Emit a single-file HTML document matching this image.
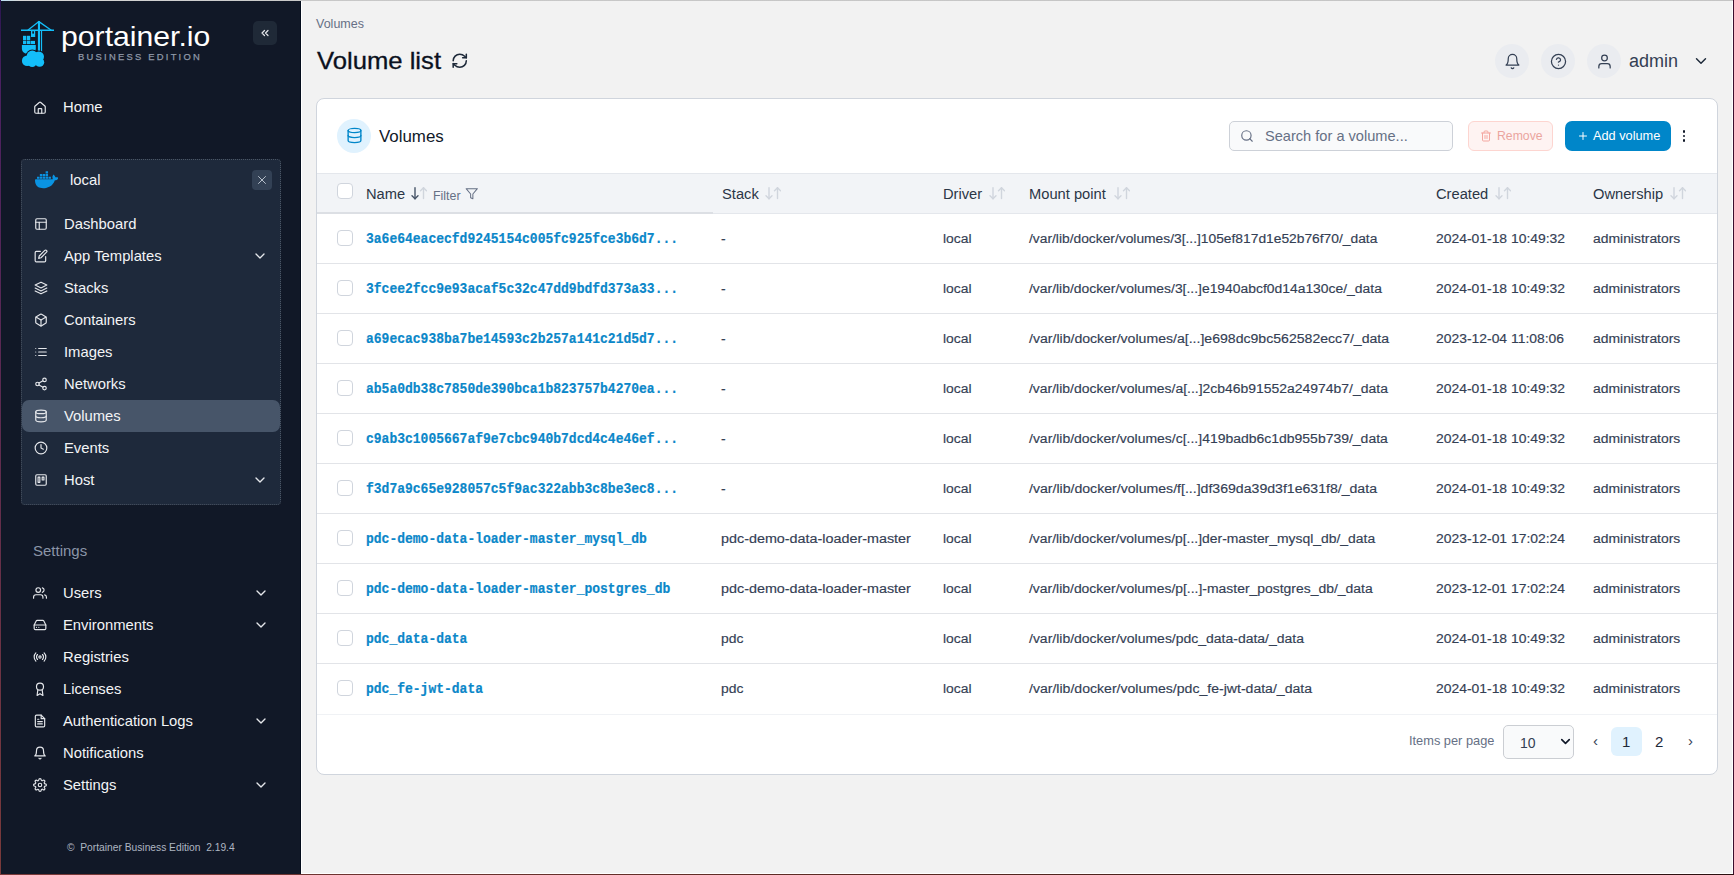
<!DOCTYPE html><html><head><meta charset="utf-8"><style>
*{box-sizing:border-box;margin:0;padding:0}
html,body{width:1734px;height:875px;overflow:hidden}
body{font-family:"Liberation Sans",sans-serif;background:#f2f2f2;position:relative;color:#101828}
svg{display:block}
.a{position:absolute;white-space:nowrap}
.nt{color:#f3f4f6;font-size:14.8px;line-height:16px}
.td{font-size:12.5px;color:#344054;line-height:16px;transform:scaleX(1.112);transform-origin:left top;-webkit-text-stroke:0.15px #344054}
.mono{font-family:"Liberation Mono",monospace;font-weight:bold;font-size:13.0px;color:#0b87c9;line-height:16px;transform:scaleY(1.09);transform-origin:left 12px;-webkit-text-stroke:0.2px #0b87c9}
.th{font-size:14.7px;color:#2b3646;line-height:16px}
</style></head><body><div class="a" style="left:0;top:0;width:301px;height:875px;background:#111827"></div>
<svg width="40" height="52" viewBox="0 0 40 52" style="position:absolute;left:18px;top:18px">
<g stroke="#13bef9" fill="none" stroke-linecap="butt">
<line x1="3" y1="12.2" x2="36" y2="12.2" stroke-width="1.4"/><polyline points="9.8 12.2 20.9 3.6 33.3 12.2" stroke-width="1.3"/>
</g>
<g fill="#13bef9">
<rect x="19.9" y="3" width="2.1" height="30.3"/><rect x="22.9" y="12" width="1.2" height="22.2"/>
<rect x="13" y="12.8" width="4.2" height="6.2"/>
<rect x="5" y="17.8" width="3.3" height="4.5"/><rect x="8.9" y="17.8" width="3.3" height="4.5"/>
<rect x="5" y="22.9" width="3.3" height="3.2"/><rect x="8.9" y="22.9" width="3.3" height="3.2"/><rect x="12.6" y="22.9" width="4.4" height="3.2"/>
<path d="M3.9 27h13.9v3.5c0 2.5-2 5.1-5.5 5.1H8.3c-2.6 0-4.4-2.4-4.4-5z"/>
</g><g fill="#111827" stroke="#111827" stroke-width="2.2"><circle cx="9.2" cy="42.8" r="5.3"/><circle cx="14.3" cy="38.2" r="5.6"/><circle cx="20.8" cy="38.8" r="5.2"/><circle cx="21.6" cy="44.2" r="4.6"/><circle cx="14.2" cy="44.6" r="4.5"/></g><g fill="#13bef9"><circle cx="9.2" cy="42.8" r="5.3"/><circle cx="14.3" cy="38.2" r="5.6"/><circle cx="20.8" cy="38.8" r="5.2"/><circle cx="21.6" cy="44.2" r="4.6"/><circle cx="14.2" cy="44.6" r="4.5"/>
</g>
<rect x="14.3" y="13.3" width="1.7" height="2.3" fill="#111827"/>
<rect x="12.5" y="19" width="5" height="0.0" fill="#111827"/>
</svg>
<div class="a" style="left:61px;top:21px;font-size:28px;line-height:32px;color:#fff;transform:scaleX(1.078);transform-origin:left top;letter-spacing:0px">portainer.io</div>
<div class="a" style="left:78px;top:52px;font-size:9.4px;line-height:10px;color:#8f98a8;letter-spacing:2.25px;font-weight:normal;-webkit-text-stroke:0.25px #8f98a8">BUSINESS EDITION</div>
<div style="position:absolute;left:253px;top:21px;width:24px;height:24px;border-radius:5px;background:#1f2937;display:flex;align-items:center;justify-content:center"><svg width="12" height="12" viewBox="0 0 24 24" fill="none" stroke="#e5e7eb" stroke-width="2.4" stroke-linecap="round" stroke-linejoin="round" ><polyline points="11 17 6 12 11 7"/><polyline points="18 17 13 12 18 7"/></svg></div>
<div style="position:absolute;left:33px;top:101px;"><svg width="14" height="14" viewBox="0 0 24 24" fill="none" stroke="#e5e7eb" stroke-width="2" stroke-linecap="round" stroke-linejoin="round" ><path d="M15 21v-7a1 1 0 0 0-1-1h-4a1 1 0 0 0-1 1v7"/><path d="M3 10a2 2 0 0 1 .7-1.5l7-6a2 2 0 0 1 2.6 0l7 6A2 2 0 0 1 21 10v9a2 2 0 0 1-2 2H5a2 2 0 0 1-2-2z"/></svg></div>
<div class="a nt" style="left:63px;top:99px">Home</div>
<div class="a" style="left:21px;top:159px;width:260px;height:346px;background:#1e293b;border:1px dotted #4b5563;border-radius:4px"></div>
<svg width="23.5" height="23.5" viewBox="0 0 24 24" style="position:absolute;left:34.5px;top:168px"><path fill="#0a93e2" d="M13.983 11.078h2.119a.186.186 0 00.186-.185V9.006a.186.186 0 00-.186-.186h-2.119a.185.185 0 00-.185.185v1.888c0 .102.083.185.185.185m-2.954-5.43h2.118a.186.186 0 00.186-.186V3.574a.186.186 0 00-.186-.185h-2.118a.185.185 0 00-.185.185v1.888c0 .102.082.185.185.185m0 2.716h2.118a.187.187 0 00.186-.186V6.29a.186.186 0 00-.186-.185h-2.118a.185.185 0 00-.185.185v1.887c0 .102.082.185.185.186m-2.93 0h2.12a.186.186 0 00.184-.186V6.29a.185.185 0 00-.185-.185H8.1a.185.185 0 00-.185.185v1.887c0 .102.083.185.185.186m-2.964 0h2.119a.186.186 0 00.185-.186V6.29a.185.185 0 00-.185-.185H5.136a.186.186 0 00-.186.185v1.887c0 .102.084.185.186.186m5.893 2.715h2.118a.186.186 0 00.186-.185V9.006a.186.186 0 00-.186-.186h-2.118a.185.185 0 00-.185.185v1.888c0 .102.082.185.185.185m-2.93 0h2.12a.185.185 0 00.184-.185V9.006a.185.185 0 00-.184-.186h-2.12a.185.185 0 00-.184.185v1.888c0 .102.083.185.185.185m-2.964 0h2.119a.185.185 0 00.185-.185V9.006a.185.185 0 00-.184-.186h-2.12a.186.186 0 00-.186.186v1.887c0 .102.084.185.186.185m-2.92 0h2.12a.185.185 0 00.184-.185V9.006a.185.185 0 00-.184-.186h-2.12a.185.185 0 00-.184.185v1.888c0 .102.082.185.185.185M23.763 9.89c-.065-.051-.672-.51-1.954-.51-.338.001-.676.03-1.01.087-.248-1.7-1.653-2.53-1.716-2.566l-.344-.199-.226.327c-.284.438-.49.922-.612 1.43-.23.97-.09 1.882.403 2.661-.595.332-1.55.413-1.744.42H.751a.751.751 0 00-.75.748 11.376 11.376 0 00.692 4.062c.545 1.428 1.355 2.48 2.41 3.124 1.18.723 3.1 1.137 5.275 1.137.983.003 1.963-.086 2.93-.266a12.248 12.248 0 003.823-1.389c.98-.567 1.86-1.288 2.61-2.136 1.252-1.418 1.998-2.997 2.553-4.4h.221c1.372 0 2.215-.549 2.68-1.009.309-.293.55-.65.707-1.046l.098-.288Z"/></svg>
<div class="a nt" style="left:70px;top:172px">local</div>
<div style="position:absolute;left:252px;top:170px;width:20px;height:20px;border-radius:4px;background:#334155;display:flex;align-items:center;justify-content:center"><svg width="14" height="14" viewBox="0 0 24 24" fill="none" stroke="#c1c9d4" stroke-width="1.6" stroke-linecap="round" stroke-linejoin="round" ><line x1="18" y1="6" x2="6" y2="18"/><line x1="6" y1="6" x2="18" y2="18"/></svg></div>
<div class="a" style="left:22px;top:400px;width:258px;height:32px;background:#475569;border-radius:7px"></div>
<div style="position:absolute;left:33.5px;top:216.5px;"><svg width="14" height="14" viewBox="0 0 24 24" fill="none" stroke="#e5e7eb" stroke-width="2" stroke-linecap="round" stroke-linejoin="round" ><rect width="18" height="18" x="3" y="3" rx="2"/><line x1="3" x2="21" y1="9" y2="9"/><line x1="9" x2="9" y1="21" y2="9"/></svg></div>
<div class="a nt" style="left:64px;top:216px">Dashboard</div>
<div style="position:absolute;left:33.5px;top:248.5px;"><svg width="14" height="14" viewBox="0 0 24 24" fill="none" stroke="#e5e7eb" stroke-width="2" stroke-linecap="round" stroke-linejoin="round" ><path d="M11 4H4a2 2 0 0 0-2 2v14a2 2 0 0 0 2 2h14a2 2 0 0 0 2-2v-7"/><path d="M18.5 2.5a2.121 2.121 0 0 1 3 3L12 15l-4 1 1-4 9.5-9.5z"/></svg></div>
<div class="a nt" style="left:64px;top:248px">App Templates</div>
<div style="position:absolute;left:252px;top:248px;"><svg width="16" height="16" viewBox="0 0 24 24" fill="none" stroke="#e5e7eb" stroke-width="2" stroke-linecap="round" stroke-linejoin="round" ><polyline points="6 9 12 15 18 9"/></svg></div>
<div style="position:absolute;left:33.5px;top:280.5px;"><svg width="14" height="14" viewBox="0 0 24 24" fill="none" stroke="#e5e7eb" stroke-width="2" stroke-linecap="round" stroke-linejoin="round" ><polygon points="12 2 2 7 12 12 22 7 12 2"/><polyline points="2 17 12 22 22 17"/><polyline points="2 12 12 17 22 12"/></svg></div>
<div class="a nt" style="left:64px;top:280px">Stacks</div>
<div style="position:absolute;left:33.5px;top:312.5px;"><svg width="14" height="14" viewBox="0 0 24 24" fill="none" stroke="#e5e7eb" stroke-width="2" stroke-linecap="round" stroke-linejoin="round" ><path d="M21 16V8a2 2 0 0 0-1-1.73l-7-4a2 2 0 0 0-2 0l-7 4A2 2 0 0 0 3 8v8a2 2 0 0 0 1 1.73l7 4a2 2 0 0 0 2 0l7-4A2 2 0 0 0 21 16z"/><polyline points="3.27 6.96 12 12.01 20.73 6.96"/><line x1="12" y1="22.08" x2="12" y2="12"/></svg></div>
<div class="a nt" style="left:64px;top:312px">Containers</div>
<div style="position:absolute;left:33.5px;top:344.5px;"><svg width="14" height="14" viewBox="0 0 24 24" fill="none" stroke="#e5e7eb" stroke-width="2" stroke-linecap="round" stroke-linejoin="round" ><line x1="8" y1="6" x2="21" y2="6"/><line x1="8" y1="12" x2="21" y2="12"/><line x1="8" y1="18" x2="21" y2="18"/><line x1="3" y1="6" x2="3.01" y2="6"/><line x1="3" y1="12" x2="3.01" y2="12"/><line x1="3" y1="18" x2="3.01" y2="18"/></svg></div>
<div class="a nt" style="left:64px;top:344px">Images</div>
<div style="position:absolute;left:33.5px;top:376.5px;"><svg width="14" height="14" viewBox="0 0 24 24" fill="none" stroke="#e5e7eb" stroke-width="2" stroke-linecap="round" stroke-linejoin="round" ><circle cx="18" cy="5" r="3"/><circle cx="6" cy="12" r="3"/><circle cx="18" cy="19" r="3"/><line x1="8.59" y1="13.51" x2="15.42" y2="17.49"/><line x1="15.41" y1="6.51" x2="8.59" y2="10.49"/></svg></div>
<div class="a nt" style="left:64px;top:376px">Networks</div>
<div style="position:absolute;left:33.5px;top:408.5px;"><svg width="14" height="14" viewBox="0 0 24 24" fill="none" stroke="#e5e7eb" stroke-width="2" stroke-linecap="round" stroke-linejoin="round" ><ellipse cx="12" cy="5" rx="9" ry="3"/><path d="M21 12c0 1.66-4 3-9 3s-9-1.34-9-3"/><path d="M3 5v14c0 1.66 4 3 9 3s9-1.34 9-3V5"/></svg></div>
<div class="a nt" style="left:64px;top:408px">Volumes</div>
<div style="position:absolute;left:33.5px;top:440.5px;"><svg width="14" height="14" viewBox="0 0 24 24" fill="none" stroke="#e5e7eb" stroke-width="2" stroke-linecap="round" stroke-linejoin="round" ><circle cx="12" cy="12" r="10"/><polyline points="12 6 12 12 16 14"/></svg></div>
<div class="a nt" style="left:64px;top:440px">Events</div>
<div style="position:absolute;left:33.5px;top:472.5px;"><svg width="14" height="14" viewBox="0 0 24 24" fill="none" stroke="#e5e7eb" stroke-width="2" stroke-linecap="round" stroke-linejoin="round" ><rect x="3" y="3" width="18" height="18" rx="2" ry="2"/><rect x="7" y="7" width="3" height="9"/><rect x="14" y="7" width="3" height="5"/></svg></div>
<div class="a nt" style="left:64px;top:472px">Host</div>
<div style="position:absolute;left:252px;top:472px;"><svg width="16" height="16" viewBox="0 0 24 24" fill="none" stroke="#e5e7eb" stroke-width="2" stroke-linecap="round" stroke-linejoin="round" ><polyline points="6 9 12 15 18 9"/></svg></div>
<div class="a" style="left:33px;top:543px;font-size:15px;line-height:16px;color:#8b95a7">Settings</div>
<div style="position:absolute;left:33px;top:586px;"><svg width="14" height="14" viewBox="0 0 24 24" fill="none" stroke="#e5e7eb" stroke-width="2" stroke-linecap="round" stroke-linejoin="round" ><path d="M17 21v-2a4 4 0 0 0-4-4H5a4 4 0 0 0-4 4v2"/><circle cx="9" cy="7" r="4"/><path d="M23 21v-2a4 4 0 0 0-3-3.87"/><path d="M16 3.13a4 4 0 0 1 0 7.75"/></svg></div>
<div class="a nt" style="left:63px;top:585px">Users</div>
<div style="position:absolute;left:253px;top:585px;"><svg width="16" height="16" viewBox="0 0 24 24" fill="none" stroke="#e5e7eb" stroke-width="2" stroke-linecap="round" stroke-linejoin="round" ><polyline points="6 9 12 15 18 9"/></svg></div>
<div style="position:absolute;left:33px;top:618px;"><svg width="14" height="14" viewBox="0 0 24 24" fill="none" stroke="#e5e7eb" stroke-width="2" stroke-linecap="round" stroke-linejoin="round" ><line x1="22" y1="12" x2="2" y2="12"/><path d="M5.45 5.11 2 12v6a2 2 0 0 0 2 2h16a2 2 0 0 0 2-2v-6l-3.45-6.89A2 2 0 0 0 16.76 4H7.24a2 2 0 0 0-1.79 1.11z"/><line x1="6" y1="16" x2="6.01" y2="16"/><line x1="10" y1="16" x2="10.01" y2="16"/></svg></div>
<div class="a nt" style="left:63px;top:617px">Environments</div>
<div style="position:absolute;left:253px;top:617px;"><svg width="16" height="16" viewBox="0 0 24 24" fill="none" stroke="#e5e7eb" stroke-width="2" stroke-linecap="round" stroke-linejoin="round" ><polyline points="6 9 12 15 18 9"/></svg></div>
<div style="position:absolute;left:33px;top:650px;"><svg width="14" height="14" viewBox="0 0 24 24" fill="none" stroke="#e5e7eb" stroke-width="2" stroke-linecap="round" stroke-linejoin="round" ><circle cx="12" cy="12" r="2"/><path d="M16.24 7.76a6 6 0 0 1 0 8.49m-8.48-.01a6 6 0 0 1 0-8.49m11.31-2.82a10 10 0 0 1 0 14.14m-14.14 0a10 10 0 0 1 0-14.14"/></svg></div>
<div class="a nt" style="left:63px;top:649px">Registries</div>
<div style="position:absolute;left:33px;top:682px;"><svg width="14" height="14" viewBox="0 0 24 24" fill="none" stroke="#e5e7eb" stroke-width="2" stroke-linecap="round" stroke-linejoin="round" ><circle cx="12" cy="8" r="6"/><polyline points="8.21 13.89 7 23 12 20 17 23 15.79 13.88"/></svg></div>
<div class="a nt" style="left:63px;top:681px">Licenses</div>
<div style="position:absolute;left:33px;top:714px;"><svg width="14" height="14" viewBox="0 0 24 24" fill="none" stroke="#e5e7eb" stroke-width="2" stroke-linecap="round" stroke-linejoin="round" ><path d="M14 2H6a2 2 0 0 0-2 2v16a2 2 0 0 0 2 2h12a2 2 0 0 0 2-2V8z"/><polyline points="14 2 14 8 20 8"/><line x1="16" y1="13" x2="8" y2="13"/><line x1="16" y1="17" x2="8" y2="17"/><polyline points="10 9 9 9 8 9"/></svg></div>
<div class="a nt" style="left:63px;top:713px">Authentication Logs</div>
<div style="position:absolute;left:253px;top:713px;"><svg width="16" height="16" viewBox="0 0 24 24" fill="none" stroke="#e5e7eb" stroke-width="2" stroke-linecap="round" stroke-linejoin="round" ><polyline points="6 9 12 15 18 9"/></svg></div>
<div style="position:absolute;left:33px;top:746px;"><svg width="14" height="14" viewBox="0 0 24 24" fill="none" stroke="#e5e7eb" stroke-width="2" stroke-linecap="round" stroke-linejoin="round" ><path d="M18 8A6 6 0 0 0 6 8c0 7-3 9-3 9h18s-3-2-3-9"/><path d="M13.73 21a2 2 0 0 1-3.46 0"/></svg></div>
<div class="a nt" style="left:63px;top:745px">Notifications</div>
<div style="position:absolute;left:33px;top:778px;"><svg width="14" height="14" viewBox="0 0 24 24" fill="none" stroke="#e5e7eb" stroke-width="2" stroke-linecap="round" stroke-linejoin="round" ><circle cx="12" cy="12" r="3"/><path d="M19.4 15a1.65 1.65 0 0 0 .33 1.82l.06.06a2 2 0 0 1 0 2.83 2 2 0 0 1-2.83 0l-.06-.06a1.65 1.65 0 0 0-1.82-.33 1.65 1.65 0 0 0-1 1.51V21a2 2 0 0 1-2 2 2 2 0 0 1-2-2v-.09A1.65 1.65 0 0 0 9 19.4a1.65 1.65 0 0 0-1.82.33l-.06.06a2 2 0 0 1-2.83 0 2 2 0 0 1 0-2.83l.06-.06a1.65 1.65 0 0 0 .33-1.82 1.65 1.65 0 0 0-1.51-1H3a2 2 0 0 1-2-2 2 2 0 0 1 2-2h.09A1.65 1.65 0 0 0 4.6 9a1.65 1.65 0 0 0-.33-1.82l-.06-.06a2 2 0 0 1 0-2.83 2 2 0 0 1 2.83 0l.06.06a1.65 1.65 0 0 0 1.82.33H9a1.65 1.65 0 0 0 1-1.51V3a2 2 0 0 1 2-2 2 2 0 0 1 2 2v.09a1.65 1.65 0 0 0 1 1.51 1.65 1.65 0 0 0 1.82-.33l.06-.06a2 2 0 0 1 2.83 0 2 2 0 0 1 0 2.83l-.06.06a1.65 1.65 0 0 0-.33 1.82V9a1.65 1.65 0 0 0 1.51 1H21a2 2 0 0 1 2 2 2 2 0 0 1-2 2h-.09a1.65 1.65 0 0 0-1.51 1z"/></svg></div>
<div class="a nt" style="left:63px;top:777px">Settings</div>
<div style="position:absolute;left:253px;top:777px;"><svg width="16" height="16" viewBox="0 0 24 24" fill="none" stroke="#e5e7eb" stroke-width="2" stroke-linecap="round" stroke-linejoin="round" ><polyline points="6 9 12 15 18 9"/></svg></div>
<div class="a" style="left:67px;top:842px;font-size:10.25px;line-height:12px;color:#aeb6c2">&copy;&nbsp; Portainer Business Edition&nbsp; 2.19.4</div>
<div class="a" style="left:316px;top:17px;font-size:12.5px;line-height:14px;color:#667085">Volumes</div>
<div class="a" style="left:316.5px;top:47px;font-size:23.6px;line-height:28px;color:#0b1120;transform:scaleX(1.087);transform-origin:left top;-webkit-text-stroke:0.3px #0b1120">Volume list</div>
<div style="position:absolute;left:450.5px;top:52px;"><svg width="17.5" height="17.5" viewBox="0 0 24 24" fill="none" stroke="#1d2939" stroke-width="2.1" stroke-linecap="round" stroke-linejoin="round" ><path d="M3 12a9 9 0 0 1 9-9 9.75 9.75 0 0 1 6.74 2.74L21 8"/><path d="M21 3v5h-5"/><path d="M21 12a9 9 0 0 1-9 9 9.75 9.75 0 0 1-6.74-2.74L3 16"/><path d="M8 16H3v5"/></svg></div>
<div style="position:absolute;left:1495px;top:44px;width:34px;height:34px;border-radius:50%;background:#eaecf0;display:flex;align-items:center;justify-content:center"><svg width="17" height="17" viewBox="0 0 24 24" fill="none" stroke="#344054" stroke-width="1.75" stroke-linecap="round" stroke-linejoin="round" ><path d="M18 8A6 6 0 0 0 6 8c0 7-3 9-3 9h18s-3-2-3-9"/><path d="M13.73 21a2 2 0 0 1-3.46 0"/></svg></div>
<div style="position:absolute;left:1541px;top:44px;width:34px;height:34px;border-radius:50%;background:#eaecf0;display:flex;align-items:center;justify-content:center"><svg width="17" height="17" viewBox="0 0 24 24" fill="none" stroke="#344054" stroke-width="1.75" stroke-linecap="round" stroke-linejoin="round" ><circle cx="12" cy="12" r="10"/><path d="M9.09 9a3 3 0 0 1 5.83 1c0 2-3 3-3 3"/><line x1="12" y1="17" x2="12.01" y2="17"/></svg></div>
<div style="position:absolute;left:1587px;top:44px;width:34px;height:34px;border-radius:50%;background:#eaecf0;display:flex;align-items:center;justify-content:center"><svg width="17" height="17" viewBox="0 0 24 24" fill="none" stroke="#344054" stroke-width="1.75" stroke-linecap="round" stroke-linejoin="round" ><path d="M20 21v-2a4 4 0 0 0-4-4H8a4 4 0 0 0-4 4v2"/><circle cx="12" cy="7" r="4"/></svg></div>
<div class="a" style="left:1629px;top:51px;font-size:18px;line-height:20px;color:#344054">admin</div>
<div style="position:absolute;left:1692px;top:52px;"><svg width="18" height="18" viewBox="0 0 24 24" fill="none" stroke="#1d2939" stroke-width="1.9" stroke-linecap="round" stroke-linejoin="round" ><polyline points="6 9 12 15 18 9"/></svg></div>
<div class="a" style="left:316px;top:98px;width:1402px;height:677px;background:#fff;border:1px solid #d0d5dd;border-radius:8px;overflow:hidden"></div>
<div style="position:absolute;left:337px;top:119px;width:34px;height:34px;border-radius:50%;background:#e0f2fe"></div>
<div style="position:absolute;left:345.5px;top:127px;"><svg width="17" height="17" viewBox="0 0 24 24" fill="none" stroke="#0086c9" stroke-width="1.9" stroke-linecap="round" stroke-linejoin="round" ><ellipse cx="12" cy="5" rx="9" ry="3"/><path d="M21 12c0 1.66-4 3-9 3s-9-1.34-9-3"/><path d="M3 5v14c0 1.66 4 3 9 3s9-1.34 9-3V5"/></svg></div>
<div class="a" style="left:379px;top:128px;font-size:16.9px;line-height:18px;color:#101828">Volumes</div>
<div class="a" style="left:1229px;top:121px;width:224px;height:30px;border:1px solid #cdd1d8;border-radius:5px;background:#f9fafb"></div>
<div style="position:absolute;left:1240px;top:129px;"><svg width="14" height="14" viewBox="0 0 24 24" fill="none" stroke="#667085" stroke-width="2" stroke-linecap="round" stroke-linejoin="round" ><circle cx="11" cy="11" r="8"/><line x1="21" y1="21" x2="16.65" y2="16.65"/></svg></div>
<div class="a" style="left:1265px;top:128px;font-size:14.6px;line-height:16px;color:#667085">Search for a volume...</div>
<div class="a" style="left:1468px;top:121px;width:85px;height:30px;border:1px solid #fdd5d0;border-radius:6px;background:#fef3f2"></div>
<div style="position:absolute;left:1479.5px;top:129.5px;"><svg width="12" height="12" viewBox="0 0 24 24" fill="none" stroke="#f4a7a0" stroke-width="2" stroke-linecap="round" stroke-linejoin="round" ><polyline points="3 6 5 6 21 6"/><path d="M19 6v14a2 2 0 0 1-2 2H7a2 2 0 0 1-2-2V6m3 0V4a2 2 0 0 1 2-2h4a2 2 0 0 1 2 2v2"/><line x1="10" y1="11" x2="10" y2="17"/><line x1="14" y1="11" x2="14" y2="17"/></svg></div>
<div class="a" style="left:1497px;top:128px;font-size:12.25px;line-height:16px;color:#eba59e">Remove</div>
<div class="a" style="left:1565px;top:121px;width:106px;height:30px;border-radius:7px;background:#0086c9"></div>
<div style="position:absolute;left:1576.5px;top:129.5px;"><svg width="12" height="12" viewBox="0 0 24 24" fill="none" stroke="#fff" stroke-width="2" stroke-linecap="round" stroke-linejoin="round" ><line x1="12" y1="5" x2="12" y2="19"/><line x1="5" y1="12" x2="19" y2="12"/></svg></div>
<div class="a" style="left:1593px;top:128px;font-size:12.75px;line-height:16px;color:#fff">Add volume</div>
<div class="a" style="left:1682.5px;top:130px;width:3px;height:12px"><div style="position:absolute;left:0;top:0;width:2.6px;height:2.6px;border-radius:50%;background:#101828"></div><div style="position:absolute;left:0;top:4.6px;width:2.6px;height:2.6px;border-radius:50%;background:#101828"></div><div style="position:absolute;left:0;top:9.2px;width:2.6px;height:2.6px;border-radius:50%;background:#101828"></div></div>
<div class="a" style="left:317px;top:173px;width:1400px;height:41px;background:#f2f4f7;border-top:1px solid #e4e7ec;border-bottom:1px solid #e4e7ec"></div>
<div class="a" style="left:317px;top:212px;width:396px;height:2px;background:#dcdfe4"></div>
<div class="a" style="left:337px;top:183px;width:16px;height:16px;border:1px solid #d0d5dd;border-radius:4px;background:#fff"></div>
<div class="a th" style="left:366px;top:186px">Name</div>
<svg class="a" style="left:410.5px;top:187px" width="16" height="14" viewBox="0 0 16 14" fill="none" stroke-width="1.4" stroke-linecap="round" stroke-linejoin="round"><g stroke="#475467"><line x1="4" y1="0.8" x2="4" y2="11.8"/><polyline points="1 8.8 4 11.8 7 8.8"/></g><g stroke="#d0d5dd"><line x1="12.5" y1="11.5" x2="12.5" y2="0.8"/><polyline points="9.5 3.8 12.5 0.8 15.5 3.8"/></g></svg>
<div class="a th" style="left:722px;top:186px">Stack</div>
<svg class="a" style="left:764.5px;top:187px" width="16" height="14" viewBox="0 0 16 14" fill="none" stroke-width="1.4" stroke-linecap="round" stroke-linejoin="round"><g stroke="#d0d5dd"><line x1="4" y1="0.8" x2="4" y2="11.8"/><polyline points="1 8.8 4 11.8 7 8.8"/></g><g stroke="#d0d5dd"><line x1="12.5" y1="11.5" x2="12.5" y2="0.8"/><polyline points="9.5 3.8 12.5 0.8 15.5 3.8"/></g></svg>
<div class="a th" style="left:943px;top:186px">Driver</div>
<svg class="a" style="left:988.5px;top:187px" width="16" height="14" viewBox="0 0 16 14" fill="none" stroke-width="1.4" stroke-linecap="round" stroke-linejoin="round"><g stroke="#d0d5dd"><line x1="4" y1="0.8" x2="4" y2="11.8"/><polyline points="1 8.8 4 11.8 7 8.8"/></g><g stroke="#d0d5dd"><line x1="12.5" y1="11.5" x2="12.5" y2="0.8"/><polyline points="9.5 3.8 12.5 0.8 15.5 3.8"/></g></svg>
<div class="a th" style="left:1029px;top:186px">Mount point</div>
<svg class="a" style="left:1113.5px;top:187px" width="16" height="14" viewBox="0 0 16 14" fill="none" stroke-width="1.4" stroke-linecap="round" stroke-linejoin="round"><g stroke="#d0d5dd"><line x1="4" y1="0.8" x2="4" y2="11.8"/><polyline points="1 8.8 4 11.8 7 8.8"/></g><g stroke="#d0d5dd"><line x1="12.5" y1="11.5" x2="12.5" y2="0.8"/><polyline points="9.5 3.8 12.5 0.8 15.5 3.8"/></g></svg>
<div class="a th" style="left:1436px;top:186px">Created</div>
<svg class="a" style="left:1494.5px;top:187px" width="16" height="14" viewBox="0 0 16 14" fill="none" stroke-width="1.4" stroke-linecap="round" stroke-linejoin="round"><g stroke="#d0d5dd"><line x1="4" y1="0.8" x2="4" y2="11.8"/><polyline points="1 8.8 4 11.8 7 8.8"/></g><g stroke="#d0d5dd"><line x1="12.5" y1="11.5" x2="12.5" y2="0.8"/><polyline points="9.5 3.8 12.5 0.8 15.5 3.8"/></g></svg>
<div class="a th" style="left:1593px;top:186px">Ownership</div>
<svg class="a" style="left:1669.5px;top:187px" width="16" height="14" viewBox="0 0 16 14" fill="none" stroke-width="1.4" stroke-linecap="round" stroke-linejoin="round"><g stroke="#d0d5dd"><line x1="4" y1="0.8" x2="4" y2="11.8"/><polyline points="1 8.8 4 11.8 7 8.8"/></g><g stroke="#d0d5dd"><line x1="12.5" y1="11.5" x2="12.5" y2="0.8"/><polyline points="9.5 3.8 12.5 0.8 15.5 3.8"/></g></svg>
<div class="a" style="left:433px;top:189px;font-size:12.4px;line-height:14px;color:#667085">Filter</div>
<div style="position:absolute;left:465px;top:187px;"><svg width="13.5" height="13.5" viewBox="0 0 24 24" fill="none" stroke="#667085" stroke-width="1.8" stroke-linecap="round" stroke-linejoin="round" ><polygon points="22 3 2 3 10 12.46 10 19 14 21 14 12.46 22 3"/></svg></div>
<div class="a" style="left:337px;top:230px;width:16px;height:16px;border:1px solid #d0d5dd;border-radius:4px;background:#fff"></div>
<div class="a mono" style="left:366px;top:232px">3a6e64eacecfd9245154c005fc925fce3b6d7...</div>
<div class="a td" style="left:721px;top:231px">-</div>
<div class="a td" style="left:943px;top:231px">local</div>
<div class="a td" style="left:1029px;top:231px;transform:scaleX(1.1041)">/var/lib/docker/volumes/3[...]105ef817d1e52b76f70/_data</div>
<div class="a td" style="left:1436px;top:231px">2024-01-18 10:49:32</div>
<div class="a td" style="left:1593px;top:231px">administrators</div>
<div class="a" style="left:317px;top:263px;width:1400px;height:1px;background:#e2e4e8"></div>
<div class="a" style="left:337px;top:280px;width:16px;height:16px;border:1px solid #d0d5dd;border-radius:4px;background:#fff"></div>
<div class="a mono" style="left:366px;top:282px">3fcee2fcc9e93acaf5c32c47dd9bdfd373a33...</div>
<div class="a td" style="left:721px;top:281px">-</div>
<div class="a td" style="left:943px;top:281px">local</div>
<div class="a td" style="left:1029px;top:281px;transform:scaleX(1.1111)">/var/lib/docker/volumes/3[...]e1940abcf0d14a130ce/_data</div>
<div class="a td" style="left:1436px;top:281px">2024-01-18 10:49:32</div>
<div class="a td" style="left:1593px;top:281px">administrators</div>
<div class="a" style="left:317px;top:313px;width:1400px;height:1px;background:#e2e4e8"></div>
<div class="a" style="left:337px;top:330px;width:16px;height:16px;border:1px solid #d0d5dd;border-radius:4px;background:#fff"></div>
<div class="a mono" style="left:366px;top:332px">a69ecac938ba7be14593c2b257a141c21d5d7...</div>
<div class="a td" style="left:721px;top:331px">-</div>
<div class="a td" style="left:943px;top:331px">local</div>
<div class="a td" style="left:1029px;top:331px;transform:scaleX(1.1266)">/var/lib/docker/volumes/a[...]e698dc9bc562582ecc7/_data</div>
<div class="a td" style="left:1436px;top:331px">2023-12-04 11:08:06</div>
<div class="a td" style="left:1593px;top:331px">administrators</div>
<div class="a" style="left:317px;top:363px;width:1400px;height:1px;background:#e2e4e8"></div>
<div class="a" style="left:337px;top:380px;width:16px;height:16px;border:1px solid #d0d5dd;border-radius:4px;background:#fff"></div>
<div class="a mono" style="left:366px;top:382px">ab5a0db38c7850de390bca1b823757b4270ea...</div>
<div class="a td" style="left:721px;top:381px">-</div>
<div class="a td" style="left:943px;top:381px">local</div>
<div class="a td" style="left:1029px;top:381px;transform:scaleX(1.1154)">/var/lib/docker/volumes/a[...]2cb46b91552a24974b7/_data</div>
<div class="a td" style="left:1436px;top:381px">2024-01-18 10:49:32</div>
<div class="a td" style="left:1593px;top:381px">administrators</div>
<div class="a" style="left:317px;top:413px;width:1400px;height:1px;background:#e2e4e8"></div>
<div class="a" style="left:337px;top:430px;width:16px;height:16px;border:1px solid #d0d5dd;border-radius:4px;background:#fff"></div>
<div class="a mono" style="left:366px;top:432px">c9ab3c1005667af9e7cbc940b7dcd4c4e46ef...</div>
<div class="a td" style="left:721px;top:431px">-</div>
<div class="a td" style="left:943px;top:431px">local</div>
<div class="a td" style="left:1029px;top:431px;transform:scaleX(1.1176)">/var/lib/docker/volumes/c[...]419badb6c1db955b739/_data</div>
<div class="a td" style="left:1436px;top:431px">2024-01-18 10:49:32</div>
<div class="a td" style="left:1593px;top:431px">administrators</div>
<div class="a" style="left:317px;top:463px;width:1400px;height:1px;background:#e2e4e8"></div>
<div class="a" style="left:337px;top:480px;width:16px;height:16px;border:1px solid #d0d5dd;border-radius:4px;background:#fff"></div>
<div class="a mono" style="left:366px;top:482px">f3d7a9c65e928057c5f9ac322abb3c8be3ec8...</div>
<div class="a td" style="left:721px;top:481px">-</div>
<div class="a td" style="left:943px;top:481px">local</div>
<div class="a td" style="left:1029px;top:481px;transform:scaleX(1.1278)">/var/lib/docker/volumes/f[...]df369da39d3f1e631f8/_data</div>
<div class="a td" style="left:1436px;top:481px">2024-01-18 10:49:32</div>
<div class="a td" style="left:1593px;top:481px">administrators</div>
<div class="a" style="left:317px;top:513px;width:1400px;height:1px;background:#e2e4e8"></div>
<div class="a" style="left:337px;top:530px;width:16px;height:16px;border:1px solid #d0d5dd;border-radius:4px;background:#fff"></div>
<div class="a mono" style="left:366px;top:532px">pdc-demo-data-loader-master_mysql_db</div>
<div class="a td" style="left:721px;top:531px;transform:scaleX(1.148)">pdc-demo-data-loader-master</div>
<div class="a td" style="left:943px;top:531px">local</div>
<div class="a td" style="left:1029px;top:531px;transform:scaleX(1.1120)">/var/lib/docker/volumes/p[...]der-master_mysql_db/_data</div>
<div class="a td" style="left:1436px;top:531px">2023-12-01 17:02:24</div>
<div class="a td" style="left:1593px;top:531px">administrators</div>
<div class="a" style="left:317px;top:563px;width:1400px;height:1px;background:#e2e4e8"></div>
<div class="a" style="left:337px;top:580px;width:16px;height:16px;border:1px solid #d0d5dd;border-radius:4px;background:#fff"></div>
<div class="a mono" style="left:366px;top:582px">pdc-demo-data-loader-master_postgres_db</div>
<div class="a td" style="left:721px;top:581px;transform:scaleX(1.148)">pdc-demo-data-loader-master</div>
<div class="a td" style="left:943px;top:581px">local</div>
<div class="a td" style="left:1029px;top:581px;transform:scaleX(1.1139)">/var/lib/docker/volumes/p[...]-master_postgres_db/_data</div>
<div class="a td" style="left:1436px;top:581px">2023-12-01 17:02:24</div>
<div class="a td" style="left:1593px;top:581px">administrators</div>
<div class="a" style="left:317px;top:613px;width:1400px;height:1px;background:#e2e4e8"></div>
<div class="a" style="left:337px;top:630px;width:16px;height:16px;border:1px solid #d0d5dd;border-radius:4px;background:#fff"></div>
<div class="a mono" style="left:366px;top:632px">pdc_data-data</div>
<div class="a td" style="left:721px;top:631px">pdc</div>
<div class="a td" style="left:943px;top:631px">local</div>
<div class="a td" style="left:1029px;top:631px;transform:scaleX(1.1177)">/var/lib/docker/volumes/pdc_data-data/_data</div>
<div class="a td" style="left:1436px;top:631px">2024-01-18 10:49:32</div>
<div class="a td" style="left:1593px;top:631px">administrators</div>
<div class="a" style="left:317px;top:663px;width:1400px;height:1px;background:#e2e4e8"></div>
<div class="a" style="left:337px;top:680px;width:16px;height:16px;border:1px solid #d0d5dd;border-radius:4px;background:#fff"></div>
<div class="a mono" style="left:366px;top:682px">pdc_fe-jwt-data</div>
<div class="a td" style="left:721px;top:681px">pdc</div>
<div class="a td" style="left:943px;top:681px">local</div>
<div class="a td" style="left:1029px;top:681px;transform:scaleX(1.1254)">/var/lib/docker/volumes/pdc_fe-jwt-data/_data</div>
<div class="a td" style="left:1436px;top:681px">2024-01-18 10:49:32</div>
<div class="a td" style="left:1593px;top:681px">administrators</div>
<div class="a" style="left:317px;top:714px;width:1400px;height:1px;background:#f0f2f5"></div>
<div class="a" style="left:1409px;top:734px;font-size:12.8px;line-height:14px;color:#667085">Items per page</div>
<div class="a" style="left:1503px;top:725px;width:71px;height:34px;border:1px solid #cbced3;border-radius:5px;background:#f9fafb"></div>
<div class="a" style="left:1520px;top:733.5px;font-size:14px;line-height:18px;color:#344054">10</div>
<div style="position:absolute;left:1558px;top:734px;"><svg width="15" height="15" viewBox="0 0 24 24" fill="none" stroke="#101828" stroke-width="2.6" stroke-linecap="round" stroke-linejoin="round" ><polyline points="6 9 12 15 18 9"/></svg></div>
<div class="a" style="left:1593px;top:732px;font-size:15px;line-height:18px;color:#344054">&lsaquo;</div>
<div class="a" style="left:1611px;top:727px;width:31px;height:29px;border-radius:6px;background:#e0f2fe"></div>
<div class="a" style="left:1622px;top:733px;font-size:15px;line-height:18px;color:#1d2939">1</div>
<div class="a" style="left:1655px;top:733px;font-size:15px;line-height:18px;color:#1d2939">2</div>
<div class="a" style="left:1688px;top:732px;font-size:15px;line-height:18px;color:#344054">&rsaquo;</div>
<div class="a" style="left:300px;top:0;width:1px;height:875px;background:#040d1c"></div>
<div class="a" style="left:1px;top:0;width:1px;height:875px;background:#0e1826"></div>
<div class="a" style="left:301px;top:0;width:1px;height:875px;background:#fff"></div>
<div class="a" style="left:301px;top:873px;width:1433px;height:1px;background:#fff"></div>
<div class="a" style="left:1732px;top:0;width:1px;height:875px;background:#fff"></div>
<div class="a" style="left:0;top:0;width:1734px;height:1px;background:linear-gradient(90deg,#b8e0f5 0,#d8d8d8 20px,#c8c8c8 300px,#c4c4c4 100%)"></div>
<div class="a" style="left:0;top:0;width:1px;height:875px;background:linear-gradient(180deg,#2a1650 0,#4a2060 80px,#5c2a50 400px,#7a3a3a 100%)"></div>
<div class="a" style="left:1733px;top:0;width:1px;height:875px;background:#3a0f2e"></div>
<div class="a" style="left:0;top:874px;width:1734px;height:1px;background:linear-gradient(90deg,#7a3a3a 0,#5a2a22 50%,#2a1010 100%)"></div></body></html>
